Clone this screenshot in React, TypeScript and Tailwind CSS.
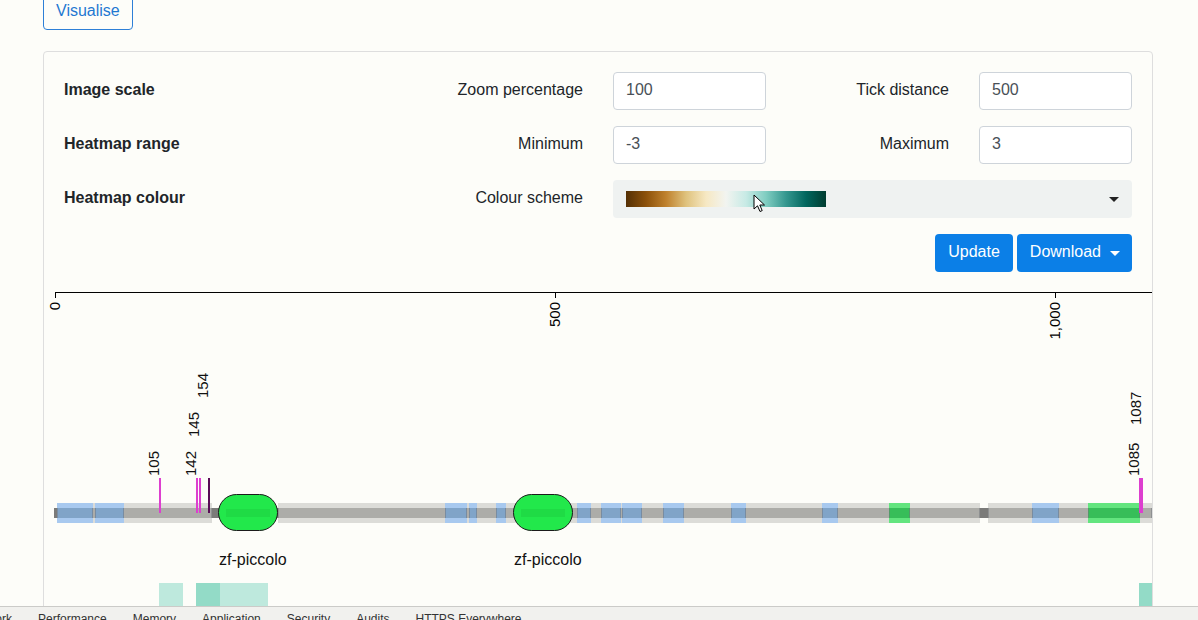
import React from 'react';

// page x -> svg x (card inner edge sits at x=44)
const OFF = 44;

const GRAY: [number, number][] = [[57, 212], [278, 980], [988, 1152]];
const BLUE: [number, number][] = [
  [57, 93], [95, 124], [445, 467], [469, 477], [496, 506], [577, 591],
  [601, 621], [622, 642], [663, 684], [731, 746], [822, 838], [1032, 1059],
];
const GREEN: [number, number][] = [[889, 910], [1088, 1140]];
const PILLS = [218, 513];

const variants = [
  { pos: 105, color: '#dd3fcf', labelY: 204 },
  { pos: 142, color: '#dd3fcf', labelY: 204 },
  { pos: 145, color: '#dd3fcf', labelY: 165 },
  { pos: 154, color: '#5a0c57', labelY: 126 },
  { pos: 1085, color: '#dd3fcf', labelY: 204 },
  { pos: 1087, color: '#dd3fcf', labelY: 153 },
];

const heat = [
  { x: 159, w: 24, c: '#bee9dd' },
  { x: 196, w: 24, c: '#93dbc7' },
  { x: 220, w: 48, c: '#bee9dd' },
  { x: 1139, w: 13, c: '#93dbc7' },
];

const inputCls =
  'h-[38px] w-full rounded-[4px] border border-[#ced4da] bg-white px-3 pb-[2px] text-[16px] text-[#495057] outline-none';
const labelCls = 'flex h-[38px] items-center pb-[2px]';

const Segments = ({ list, outer, core }: { list: [number, number][]; outer: string; core: string }) => (
  <>
    {list.map(([a, b], i) => (
      <g key={i}>
        <rect x={a - OFF} y={231} width={b - a} height={20} fill={outer} />
        <rect x={a - OFF} y={236} width={b - a} height={10} fill={core} />
        <rect x={a - OFF} y={236} width={1} height={10} fill="#6f7479" opacity={0.5} />
        <rect x={b - OFF - 1} y={236} width={1} height={10} fill="#6f7479" opacity={0.5} />
      </g>
    ))}
  </>
);

const Track = () => (
  <svg width={1108} height={340} className="block" style={{ fontFamily: "'Liberation Sans', Arial, sans-serif" }}>
    {/* axis */}
    <line x1={11} y1={20.5} x2={1108} y2={20.5} stroke="#000" />
    {[0, 500, 1000].map((t) => (
      <g key={t}>
        <line x1={t + 11.5} y1={20} x2={t + 11.5} y2={26} stroke="#000" />
        <text
          transform={`translate(${t + 11}, 30) rotate(-90)`}
          textAnchor="end"
          dy="0.35em"
          fontSize={15}
          fill="#000"
        >
          {t === 1000 ? '1,000' : t}
        </text>
      </g>
    ))}

    {/* backbone */}
    <rect x={10} y={236} width={1098} height={10} fill="#7b7b79" />
    <Segments list={GRAY} outer="#dcdcd8" core="#acaca8" />
    <Segments list={BLUE} outer="#a8c9ef" core="#80a4c8" />
    <Segments list={GREEN} outer="#63e57f" core="#37be59" />

    {/* variants */}
    {variants.map((v) => (
      <g key={v.pos}>
        <line x1={v.pos + 11} y1={206} x2={v.pos + 11} y2={241} stroke={v.color} strokeWidth={2} />
        <text transform={`translate(${v.pos + 10}, ${v.labelY}) rotate(-90)`} fontSize={15} fill="#111">
          {v.pos}
        </text>
      </g>
    ))}

    {/* domains */}
    {PILLS.map((x) => (
      <g key={x}>
        <rect x={x - OFF + 0.5} y={222.5} width={59} height={36} rx={18} fill="#22e84b" stroke="#1b1b1b" />
        <rect x={x - OFF + 8} y={237} width={44} height={8} fill="#1fdb45" />
        <text x={x - OFF + 1} y={293} fontSize={16} fill="#111">
          zf-piccolo
        </text>
      </g>
    ))}

    {/* heatmap */}
    {heat.map((h) => (
      <rect key={h.x} x={h.x - OFF} y={311} width={h.w} height={40} fill={h.c} />
    ))}
  </svg>
);

const Cursor = () => (
  <svg width={14} height={20} viewBox="0 0 14 20" className="absolute left-[140px] top-[14px]">
    <path d="M1 1 L1 15 L4.5 11.8 L7 17.5 L9.2 16.6 L6.8 11 L11.5 11 Z" fill="#fff" stroke="#000" strokeWidth={1} />
  </svg>
);

export default function App() {
  const tabs = ['Network', 'Performance', 'Memory', 'Application', 'Security', 'Audits', 'HTTPS Everywhere'];
  return (
    <div className="flex h-[620px] flex-col overflow-hidden bg-[#fdfdf9] font-['Liberation_Sans',Arial,sans-serif] text-[#212529]">
      <div className="flex-1 overflow-hidden">
        <div className="ml-[43px] mt-[-8px]">
          <button className="h-[38px] rounded-[4px] border border-[#2d7fd7] px-3 text-[16px] text-[#1f78d1]">
            Visualise
          </button>
        </div>

        <div className="ml-[43px] mt-[21px] w-[1110px] rounded-[4px] border border-[#dedede]">
          <div className="px-5 pt-5">
            <div className="grid grid-cols-6 gap-x-[30px] gap-y-4 text-[16px]">
              <div className={`col-span-2 font-bold ${labelCls}`}>Image scale</div>
              <div className={`justify-end ${labelCls}`}>Zoom percentage</div>
              <input className={inputCls} defaultValue="100" />
              <div className={`justify-end ${labelCls}`}>Tick distance</div>
              <input className={inputCls} defaultValue="500" />

              <div className={`col-span-2 font-bold ${labelCls}`}>Heatmap range</div>
              <div className={`justify-end ${labelCls}`}>Minimum</div>
              <input className={inputCls} defaultValue="-3" />
              <div className={`justify-end ${labelCls}`}>Maximum</div>
              <input className={inputCls} defaultValue="3" />

              <div className={`col-span-2 font-bold ${labelCls}`}>Heatmap colour</div>
              <div className={`justify-end ${labelCls}`}>Colour scheme</div>
              <div className="relative col-span-3 flex h-[38px] items-center rounded-[4px] bg-[#eff2f1] pl-[13px] pr-[13px]">
                <div className="h-[16px] w-[200px] bg-[linear-gradient(to_right,#543005,#8c510a,#bf812d,#dfc27d,#f6e8c3,#f2f4f0,#c7eae5,#80cdc1,#35978f,#01665e,#003c30)]" />
                <span className="ml-auto inline-block border-x-[5px] border-t-[5px] border-x-transparent border-t-[#222]" />
                <Cursor />
              </div>

              <div className="col-span-6 flex justify-end gap-1">
                <button className="h-[38px] rounded-[4px] bg-[#0b7fe7] px-[13px] pb-[2px] text-[16px] text-white">Update</button>
                <button className="flex h-[38px] items-center rounded-[4px] bg-[#0b7fe7] pl-[13px] pr-[12px] pb-[2px] text-[16px] text-white">
                  Download
                  <span className="ml-[9px] mt-[2px] inline-block border-x-[5px] border-t-[5px] border-x-transparent border-t-white" />
                </button>
              </div>
            </div>
          </div>
          <Track />
        </div>
      </div>

      <div className="h-[14px] shrink-0 border-t border-[#cbcbc8] bg-[#f1f1ee]">
        <div className="ml-[-32px] flex gap-[26px] pt-[4px] text-[12px] leading-[16px] text-[#333]">
          {tabs.map((t) => (
            <span key={t} className="whitespace-nowrap">
              {t}
            </span>
          ))}
        </div>
      </div>
    </div>
  );
}
